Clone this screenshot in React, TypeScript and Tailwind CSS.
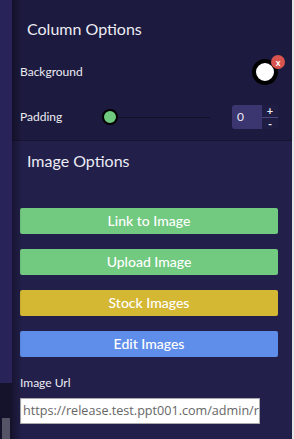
import React from 'react';

const buttons = [
  { label: 'Link to Image', cls: 'bg-[#72c980]' },
  { label: 'Upload Image', cls: 'bg-[#72c980]' },
  { label: 'Stock Images', cls: 'bg-[#d4b733]' },
  { label: 'Edit Images', cls: 'bg-[#5f8eea]' },
];

const App: React.FC = () => {
  return (
    <div className="w-[294px] h-[439px] flex overflow-hidden bg-[#1c1a3e] font-['Lato','Open_Sans',sans-serif] text-[#ececf4]">
      {/* left strip */}
      <div className="w-[12px] flex flex-col bg-[#28245a]">
        <div className="h-[383px]"></div>
        <div className="h-[35px] bg-[#15132c]"></div>
        <div className="flex-1 flex bg-[#15132c]">
          <div className="w-[2px]"></div>
          <div className="w-[8px] bg-[#555366]"></div>
        </div>
      </div>

      {/* panel */}
      <div className="flex-1 flex flex-col relative">
        <div className="absolute inset-y-0 left-0 w-[10px] bg-gradient-to-r from-[rgba(0,0,0,0.35)] to-transparent pointer-events-none"></div>

        {/* column options */}
        <section className="h-[141px] bg-[#1c1a3e] border-b border-[#16142f] flex flex-col">
          <h2 className="pt-[17px] pl-[15px] text-base leading-6">Column Options</h2>
          <div className="mt-[17px] h-[28px] flex items-center justify-between pl-[8px] pr-[14px]">
            <span className="text-xs">Background</span>
            <div className="relative">
              <div className="w-[26px] h-[26px] rounded-full bg-white border-[4px] border-black"></div>
              <div className="absolute -top-[4px] -right-[7px] w-[14px] h-[14px] rounded-full bg-[#d9534f] flex items-center justify-center text-[9px] leading-none text-white font-bold">x</div>
            </div>
          </div>
          <div className="mt-[19px] h-[24px] flex items-center pl-[8px] pr-[14px]">
            <span className="text-xs w-[82px]">Padding</span>
            <div className="flex items-center w-[118px]">
              <div className="w-[16px] h-[16px] rounded-full bg-[#6fc97f] border-2 border-black shrink-0"></div>
              <div className="h-px bg-[#131129] w-[92px]"></div>
            </div>
            <div className="ml-auto flex h-[24px] rounded-[3px] overflow-hidden">
              <div className="w-[30px] bg-[#3b3670] text-xs flex items-center pl-[5px]">0</div>
              <div className="w-[16px] bg-[#201d45] flex flex-col text-[11px] leading-none font-bold">
                <div className="flex-1 flex items-center justify-center border-b border-[#4a4680]">+</div>
                <div className="flex-1 flex items-center justify-center">-</div>
              </div>
            </div>
          </div>
        </section>

        {/* image options */}
        <section className="flex-1 bg-[#221f4a] flex flex-col pl-[8px] pr-[14px]">
          <h2 className="pt-[8px] pl-[7px] text-base leading-6">Image Options</h2>
          <div className="mt-[35px] flex flex-col gap-[15px]">
            {buttons.map(b => (
              <button key={b.label} className={`h-[26px] w-full rounded-[2px] text-white text-sm font-medium ${b.cls}`}>
                {b.label}
              </button>
            ))}
          </div>
          <label className="mt-[18px] text-xs leading-4">Image Url</label>
          <div className="mt-[7px] w-[240px] h-[26px] bg-white border border-[#a9a9a9] overflow-hidden flex items-center pl-[2px]">
            <span className="whitespace-nowrap text-[12.6px] text-[#666] font-['Open_Sans',sans-serif]">https://release.test.ppt001.com/admin/r</span>
          </div>
        </section>
      </div>

      {/* scrollbar edge */}
      <div className="w-[2px] bg-[#e6e6e6]"></div>
    </div>
  );
};

export default App;
